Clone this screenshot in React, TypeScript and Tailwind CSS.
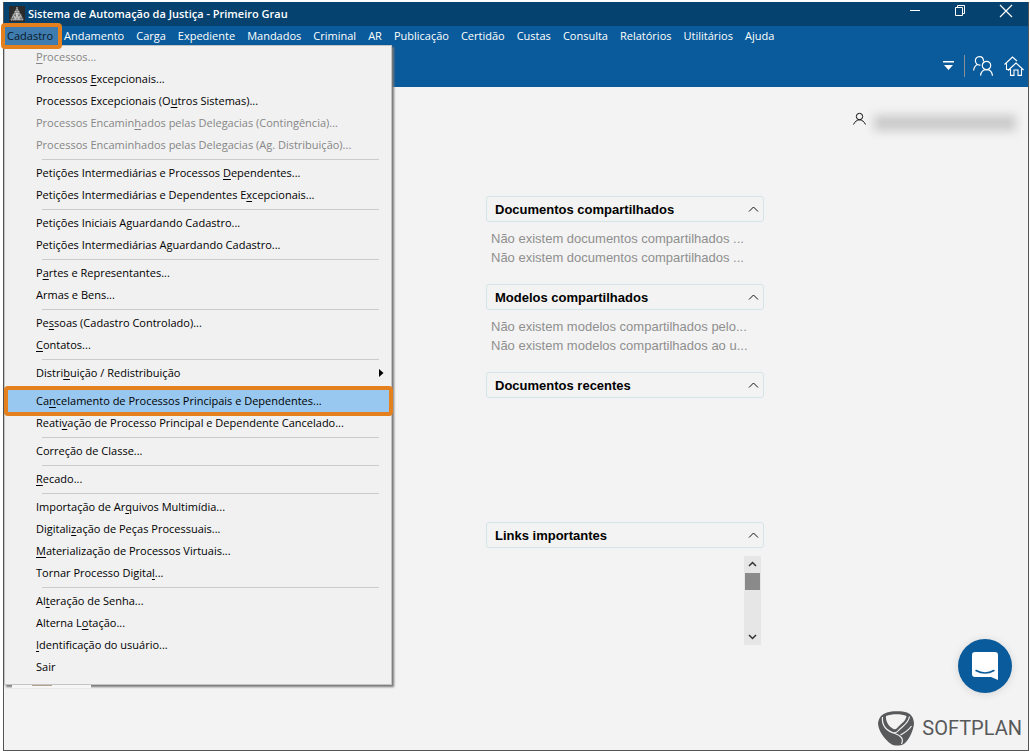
import { Fragment } from "react"

const menuBar = ["Andamento", "Carga", "Expediente", "Mandados", "Criminal", "AR", "Publicação", "Certidão", "Custas", "Consulta", "Relatórios", "Utilitários", "Ajuda"]

type Item = { label: string; disabled?: boolean; submenu?: boolean; active?: boolean }

// "_" marks the access key of the entry, which is drawn underlined
const menuGroups: Item[][] = [
    [
        { label: "_Processos...", disabled: true },
        { label: "Processos _Excepcionais..." },
        { label: "Processos Excepcionais (O_utros Sistemas)..." },
        { label: "Processos Encamin_hados pelas Delegacias (Contingência)...", disabled: true },
        { label: "Processos Encaminhados pelas Dele_gacias (Ag. Distribuição)...", disabled: true },
    ],
    [
        { label: "Petições Intermediárias e Processos _Dependentes..." },
        { label: "Petições Intermediárias e Dependentes E_xcepcionais..." },
    ],
    [
        { label: "Petições Iniciais Aguardando Cadastro..." },
        { label: "Petições Intermediárias Aguardando Cadastro..." },
    ],
    [{ label: "P_artes e Representantes..." }, { label: "Armas e Bens..." }],
    [{ label: "Pe_ssoas (Cadastro Controlado)..." }, { label: "_Contatos..." }],
    [{ label: "Distri_buição / Redistribuição", submenu: true }],
    [
        { label: "Ca_ncelamento de Processos Principais e Dependentes...", active: true },
        { label: "Reati_vação de Processo Principal e Dependente Cancelado..." },
    ],
    [{ label: "Correção de Classe..." }],
    [{ label: "_Recado..." }],
    [
        { label: "Importação de Ar_quivos Multimídia..." },
        { label: "Digitali_zação de Peças Processuais..." },
        { label: "_Materialização de Processos Virtuais..." },
        { label: "Tornar Processo Digita_l..." },
    ],
    [
        { label: "Al_teração de Senha..." },
        { label: "Alterna L_otação..." },
        { label: "_Identificação do usuário..." },
        { label: "Sair" },
    ],
]

const AccessLabel = ({ text }: { text: string }) => {
    const i = text.indexOf("_")
    if (i < 0) return <span>{text}</span>
    return (
        <span>
            {text.slice(0, i)}
            <span className="underline underline-offset-2">{text[i + 1]}</span>
            {text.slice(i + 2)}
        </span>
    )
}

const Panel = ({ title, lines = [] }: { title: string; lines?: string[] }) => (
    <section>
        <h2>
            <button className="flex h-[26px] w-full items-center justify-between rounded-[3px] border border-[#d3e5e8] pl-2 pr-1 text-[13px] font-bold text-black">
                <span className="pt-0.5">{title}</span>
                <svg width="11" height="6" viewBox="0 0 11 6" fill="none" stroke="#111">
                    <path d="M1 5.500 5.500 1 10 5.500" />
                </svg>
            </button>
        </h2>
        {lines.length > 0 && (
            <div className="px-[5px] pt-[7px] text-[13px] leading-[19px] text-[#8f8f8f]">
                {lines.map((line, i) => (
                    <p key={i} className="whitespace-nowrap">{line}</p>
                ))}
            </div>
        )}
    </section>
)

const App = () => {
    return (
        <div className="min-h-screen bg-white pb-px pl-[3px] pr-px pt-[2px] font-['Open_Sans',sans-serif] text-[11px]">
            <div className="relative flex min-h-[749px] flex-col border-b border-l border-r border-[#555] bg-[#f3f3f3]">
                {/* Title bar */}
                <header className="flex h-6 shrink-0 items-center bg-[#05426f] pl-[5px] text-white">
                    <svg width="16" height="16" viewBox="0 0 16 16" className="bg-[#2b2b2b]">
                        <path d="M8 1 15 14H1Z" fill="#777" />
                        <path d="M8 1V14M6 5 10.500 14M10 5 5.500 14M4 8.500 7 14M12 8.500 9 14M2 14H14M3 11H13M5 8H11" stroke="#eee" strokeWidth=".8" strokeDasharray="1.300 .8" />
                    </svg>
                    <h1 className="ml-[3px] flex-1 font-semibold">Sistema de Automação da Justiça - Primeiro Grau</h1>
                    <div className="flex h-full items-start gap-[33px] pr-[15px] pt-[2px]">
                        <button aria-label="Minimizar">
                            <svg width="12" height="14" viewBox="0 0 12 14"><path d="M1 6.500H11" stroke="#fff" /></svg>
                        </button>
                        <button aria-label="Restaurar">
                            <svg width="12" height="14" viewBox="0 0 12 14" fill="none" stroke="#fff"><path d="M1.500 3.500H8.500V11.500H1.500ZM3.500 3.500V1.500H10.500V9.500H8.500" /></svg>
                        </button>
                        <button aria-label="Fechar">
                            <svg width="14" height="14" viewBox="0 0 14 14" stroke="#fff" strokeWidth="1.200"><path d="M1 1 13 13M13 1 1 13" /></svg>
                        </button>
                    </div>
                </header>

                {/* Menu bar */}
                <nav className="flex h-5 shrink-0 items-center bg-[#0a5b9b] text-white">
                    <div className="relative">
                        <button className="flex h-5 w-[55px] items-center bg-[#3f7cb0] pl-[3px] text-[#0b1a28]">Cadastro</button>
                        <div className="pointer-events-none absolute -inset-[3px] z-20 rounded-[4px] border-4 border-[#e5801f]" />

                        <div role="menu" className="absolute left-0 top-[19px] z-10 w-[388px] border border-[#c4c4c4] bg-[#f1f1f1] pb-[6px] text-black shadow-[2px_2px_2px_#777]">
                            {menuGroups.map((group, g) => (
                                <Fragment key={g}>
                                    {g > 0 && <div className="mb-[2px] ml-[37px] mr-3 mt-[3px] h-px bg-[#cbcbcb]" />}
                                    {group.map((item) => (
                                        <button
                                            key={item.label}
                                            role="menuitem"
                                            disabled={item.disabled}
                                            className={`relative flex h-[22px] w-full items-center justify-between whitespace-nowrap pl-[31px] pr-[7px] ${item.disabled ? "text-[#868686]" : ""} ${item.active ? "bg-[#98c8ef]" : ""}`}
                                        >
                                            <AccessLabel text={item.label} />
                                            {item.submenu && (
                                                <svg width="5" height="8" viewBox="0 0 5 8"><path d="M0 0 4.500 4 0 8Z" /></svg>
                                            )}
                                            {item.active && (
                                                <span className="absolute -bottom-1 -left-px -right-[2px] -top-1 rounded-[4px] border-4 border-[#e5801f]" />
                                            )}
                                        </button>
                                    ))}
                                </Fragment>
                            ))}
                            {/* strip of the window behind that shows through the shadow */}
                            <div className="absolute left-[7px] top-full mt-px flex h-[3px] w-[79px] bg-[#f6f6f6] pl-5">
                                <span className="h-px w-5 bg-[#b3a18c]" />
                            </div>
                        </div>
                    </div>
                    <div className="flex gap-3 pl-[5px]">
                        {menuBar.map((name) => (
                            <button key={name}>{name}</button>
                        ))}
                    </div>
                </nav>

                {/* Toolbar */}
                <div className="flex h-[41px] shrink-0 items-center justify-end bg-[#0a5b9b] pb-[2px] pr-1 text-white">
                    <button aria-label="Opções">
                        <svg width="11" height="9" viewBox="0 0 11 9" fill="#fff"><path d="M0 0H11V1.500H0ZM1 4H10L5.500 9Z" /></svg>
                    </button>
                    <span className="ml-[10px] mr-2 h-[22px] w-px bg-[#8b8f93]" />
                    <button aria-label="Usuários">
                        <svg width="20" height="20" viewBox="0 0 20 20" fill="none" stroke="#fff" strokeWidth="1.200">
                            <circle cx="13.500" cy="9.500" r="4.200" />
                            <path d="M7.500 19.700C8 16 10.500 13.700 13.500 13.700S19 16 19.500 19.700M10.500 5.500C10.500 2.500 9 .7 6.500 .7 3.500 .7 2 2.800 2.500 5.500 3 8 5 9.300 7.500 9M.6 14.500C1 11.500 2.300 9.500 4.500 8.500" />
                        </svg>
                    </button>
                    <button aria-label="Início" className="ml-[11px]">
                        <svg width="20" height="20" viewBox="0 0 20 20" fill="none" stroke="#fff" strokeWidth="1.100">
                            <path d="M.5 8.500 8.500 1 13 5M2.500 7.500V13.500H5M4 14.500 12 7 19.600 14M6.500 13V19.400H10V14H14V19.400H17.500V13" />
                        </svg>
                    </button>
                </div>

                {/* Workspace */}
                <main className="flex flex-1 flex-col font-['Liberation_Sans',Arial,sans-serif]">
                    <div className="flex h-[109px] items-start justify-end pr-3 pt-[23px]">
                        <svg width="13" height="16" viewBox="0 0 13 16" fill="none" stroke="#111" className="mt-px">
                            <circle cx="6.500" cy="5.500" r="3.200" />
                            <path d="M.5 13.500C2 10.500 4 8.800 6.500 8.800S11 10.500 12.500 13.500" />
                        </svg>
                        <div className="ml-2 mt-[5px] h-4 w-[142px] bg-[#cbcbcb] blur-[5px]" />
                    </div>
                    <div className="ml-[482px] w-[278px]">
                        <div className="flex flex-col gap-[17px]">
                            <Panel
                                title="Documentos compartilhados"
                                lines={["Não existem documentos compartilhados ...", "Não existem documentos compartilhados ..."]}
                            />
                            <Panel
                                title="Modelos compartilhados"
                                lines={["Não existem modelos compartilhados pelo...", "Não existem modelos compartilhados ao u..."]}
                            />
                            <Panel title="Documentos recentes" />
                        </div>
                        <div className="mt-[124px]">
                            <Panel title="Links importantes" />
                            <div className="ml-auto mr-[3px] mt-2 flex h-[89px] w-[17px] flex-col items-center bg-[#e6e6e6]">
                                <svg width="17" height="17" viewBox="0 0 17 17" fill="none" stroke="#333" strokeWidth="1.500"><path d="M5 10 8.500 6.500 12 10" /></svg>
                                <div className="h-[17px] w-[15px] bg-[#8a8a8a]" />
                                <svg width="17" height="17" viewBox="0 0 17 17" fill="none" stroke="#333" strokeWidth="1.500" className="mt-auto"><path d="M5 7 8.500 10.500 12 7" /></svg>
                            </div>
                        </div>
                    </div>
                </main>

                <div className="absolute bottom-1 right-[6px] flex flex-col items-end">
                    <button aria-label="Abrir conversa" className="mb-[17px] mr-[10px] flex size-[54px] items-center justify-center rounded-full bg-[#0a5b9b] shadow-[0_1px_8px_#00000020]">
                        <svg width="28" height="28" viewBox="0 0 28 28">
                            <path d="M4 0H24Q27 0 27 3V28L20 25H4Q1 25 1 22V3Q1 0 4 0Z" fill="#fff" />
                            <path d="M5 18.500Q14 23.500 23 18.500" fill="none" stroke="#0a5b9b" strokeWidth="1.500" strokeLinecap="round" />
                        </svg>
                    </button>
                    <div className="flex items-center">
                        <svg width="36" height="35" viewBox="0 0 36 35">
                            <path d="M9 1.500C14-.3 24-.3 29 1.500 33 3 36 7 36 13 35 21 30 31 25 33.500 22 35 16 35 13 33 6 28 0 19 0 12 1 6 4 3 9 1.500Z" fill="#58595b" />
                            <path d="M8 5C14 2.500 23 2.500 28.500 5 28 9.500 24 12 20.500 15.500 19 17.500 17.500 18.800 15.500 18 10 15 7.500 10 8 5Z" fill="#f3f3f3" />
                            <path d="M4.500 6C3.500 15 9 20 17 22.500 23 24.500 26 28 23.500 33M31.500 5.500C30.500 13 24 15 20 20 19 21.500 17.500 22 15 21.800M33.500 15C30 20 26 22 22.500 24" fill="none" stroke="#f3f3f3" strokeWidth="1.200" />
                        </svg>
                        <span className="ml-2 font-['Roboto',sans-serif] text-[20px] leading-9 text-[#58595b]">SOFTPLAN</span>
                    </div>
                </div>
            </div>
        </div>
    )
}

export default App
